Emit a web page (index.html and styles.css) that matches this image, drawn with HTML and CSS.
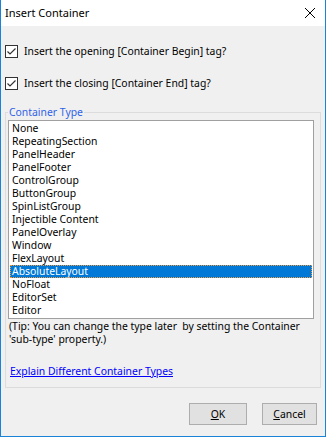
FILE: index.html
```html
<!DOCTYPE html>
<html>
<head>
<meta charset="utf-8">
<link rel="stylesheet" href="styles.css">
</head>
<body>
<div class="win">
  <div class="titlebar">
    <span class="title">Insert Container</span>
    <svg class="close" width="10" height="10" viewBox="0 0 10 10"><path d="M0 0L10 10M10 0L0 10" stroke="#000" stroke-width="1" fill="none"/></svg>
  </div>
  <div class="content">
    <label class="check">
      <span class="box"><svg width="11" height="11" viewBox="0 0 11 11"><path d="M1.5 5.5L4 8L9.5 2.5" stroke="#333" stroke-width="1.2" fill="none"/></svg></span>
      <span>Insert the opening [Container Begin] tag?</span>
    </label>
    <label class="check">
      <span class="box"><svg width="11" height="11" viewBox="0 0 11 11"><path d="M1.5 5.5L4 8L9.5 2.5" stroke="#333" stroke-width="1.2" fill="none"/></svg></span>
      <span>Insert the closing [Container End] tag?</span>
    </label>
    <fieldset class="group">
      <legend class="legend">Container Type</legend>
      <ul class="list">
        <li>None</li>
        <li>RepeatingSection</li>
        <li>PanelHeader</li>
        <li>PanelFooter</li>
        <li>ControlGroup</li>
        <li>ButtonGroup</li>
        <li>SpinListGroup</li>
        <li>Injectible Content</li>
        <li>PanelOverlay</li>
        <li>Window</li>
        <li>FlexLayout</li>
        <li class="sel">AbsoluteLayout</li>
        <li>NoFloat</li>
        <li>EditorSet</li>
        <li>Editor</li>
      </ul>
      <p class="tip">(Tip: You can change the type later&nbsp; by setting the Container<br>'sub-type' property.)</p>
      <a class="link" href="#">Explain Different Container Types</a>
    </fieldset>
    <div class="buttons">
      <button class="btn ok"><u>O</u>K</button>
      <button class="btn cancel"><u>C</u>ancel</button>
    </div>
  </div>
</div>
</body>
</html>
```
FILE: styles.css
```css
html, body {
  margin: 0;
  padding: 0;
  background: #f0f0f0;
}
body {
  width: 326px;
  height: 437px;
  overflow: hidden;
  font-family: "Noto Sans", "Open Sans", sans-serif;
  font-size: 10.4px;
  color: #000;
}
.win {
  width: 326px;
  height: 437px;
  box-sizing: border-box;
  border: 1px solid #1883d7;
  border-top: none;
  background: #f0f0f0;
  display: flex;
  flex-direction: column;
}
.titlebar {
  height: 26px;
  background: #fff;
  display: flex;
  align-items: center;
  justify-content: space-between;
  padding: 0 10px 0 4px;
  flex-shrink: 0;
}
.title {
  font-size: 11px;
  line-height: 16px;
}
.close {
  display: block;
  margin-top: -1px;
}
.content {
  display: flex;
  flex-direction: column;
}
.check {
  display: flex;
  align-items: center;
  gap: 6px;
  margin: 19px 0 0 4px;
  height: 13px;
  line-height: 13px;
}
.box {
  width: 11px;
  height: 11px;
  border: 1px solid #333;
  background: #fff;
  display: block;
  flex-shrink: 0;
}
.box svg {
  display: block;
}
.group {
  margin: 15px 4px 0 4px;
  padding: 0 0 9px 2px;
  border: 1px solid #dcdcdc;
  min-width: 0;
  width: 316px;
  box-sizing: border-box;
}
.legend {
  padding: 0 1px;
  margin: 0;
  color: #2f62e8;
  line-height: 14px;
}
.list {
  list-style: none;
  margin: 1px 0 0 0;
  padding: 1px;
  width: 306px;
  box-sizing: border-box;
  border: 1px solid #a0a0a0;
  background: #fff;
}
.list li {
  height: 13px;
  line-height: 13px;
  padding-left: 2px;
  white-space: nowrap;
}
.list li.sel {
  background: #0078d7;
  color: #fff;
  outline: 1px dotted #f09a3c;
  outline-offset: -1px;
}
.tip {
  margin: 1px 0 0 1px;
  line-height: 13px;
}
.link {
  display: block;
  align-self: flex-start;
  margin: 19px 0 0 2px;
  color: #0000ff;
  line-height: 13px;
  text-decoration: underline;
}
.buttons {
  display: flex;
  justify-content: flex-end;
  gap: 15px;
  margin-top: 15px;
  padding-right: 8px;
}
.btn {
  height: 22px;
  box-sizing: border-box;
  border: 1px solid #adadad;
  background: #e1e1e1;
  font-family: inherit;
  font-size: inherit;
  color: #000;
  padding: 0;
  line-height: 18px;
}
.btn u {
  text-decoration: underline;
}
.ok {
  width: 58px;
}
.cancel {
  width: 55px;
}
```
